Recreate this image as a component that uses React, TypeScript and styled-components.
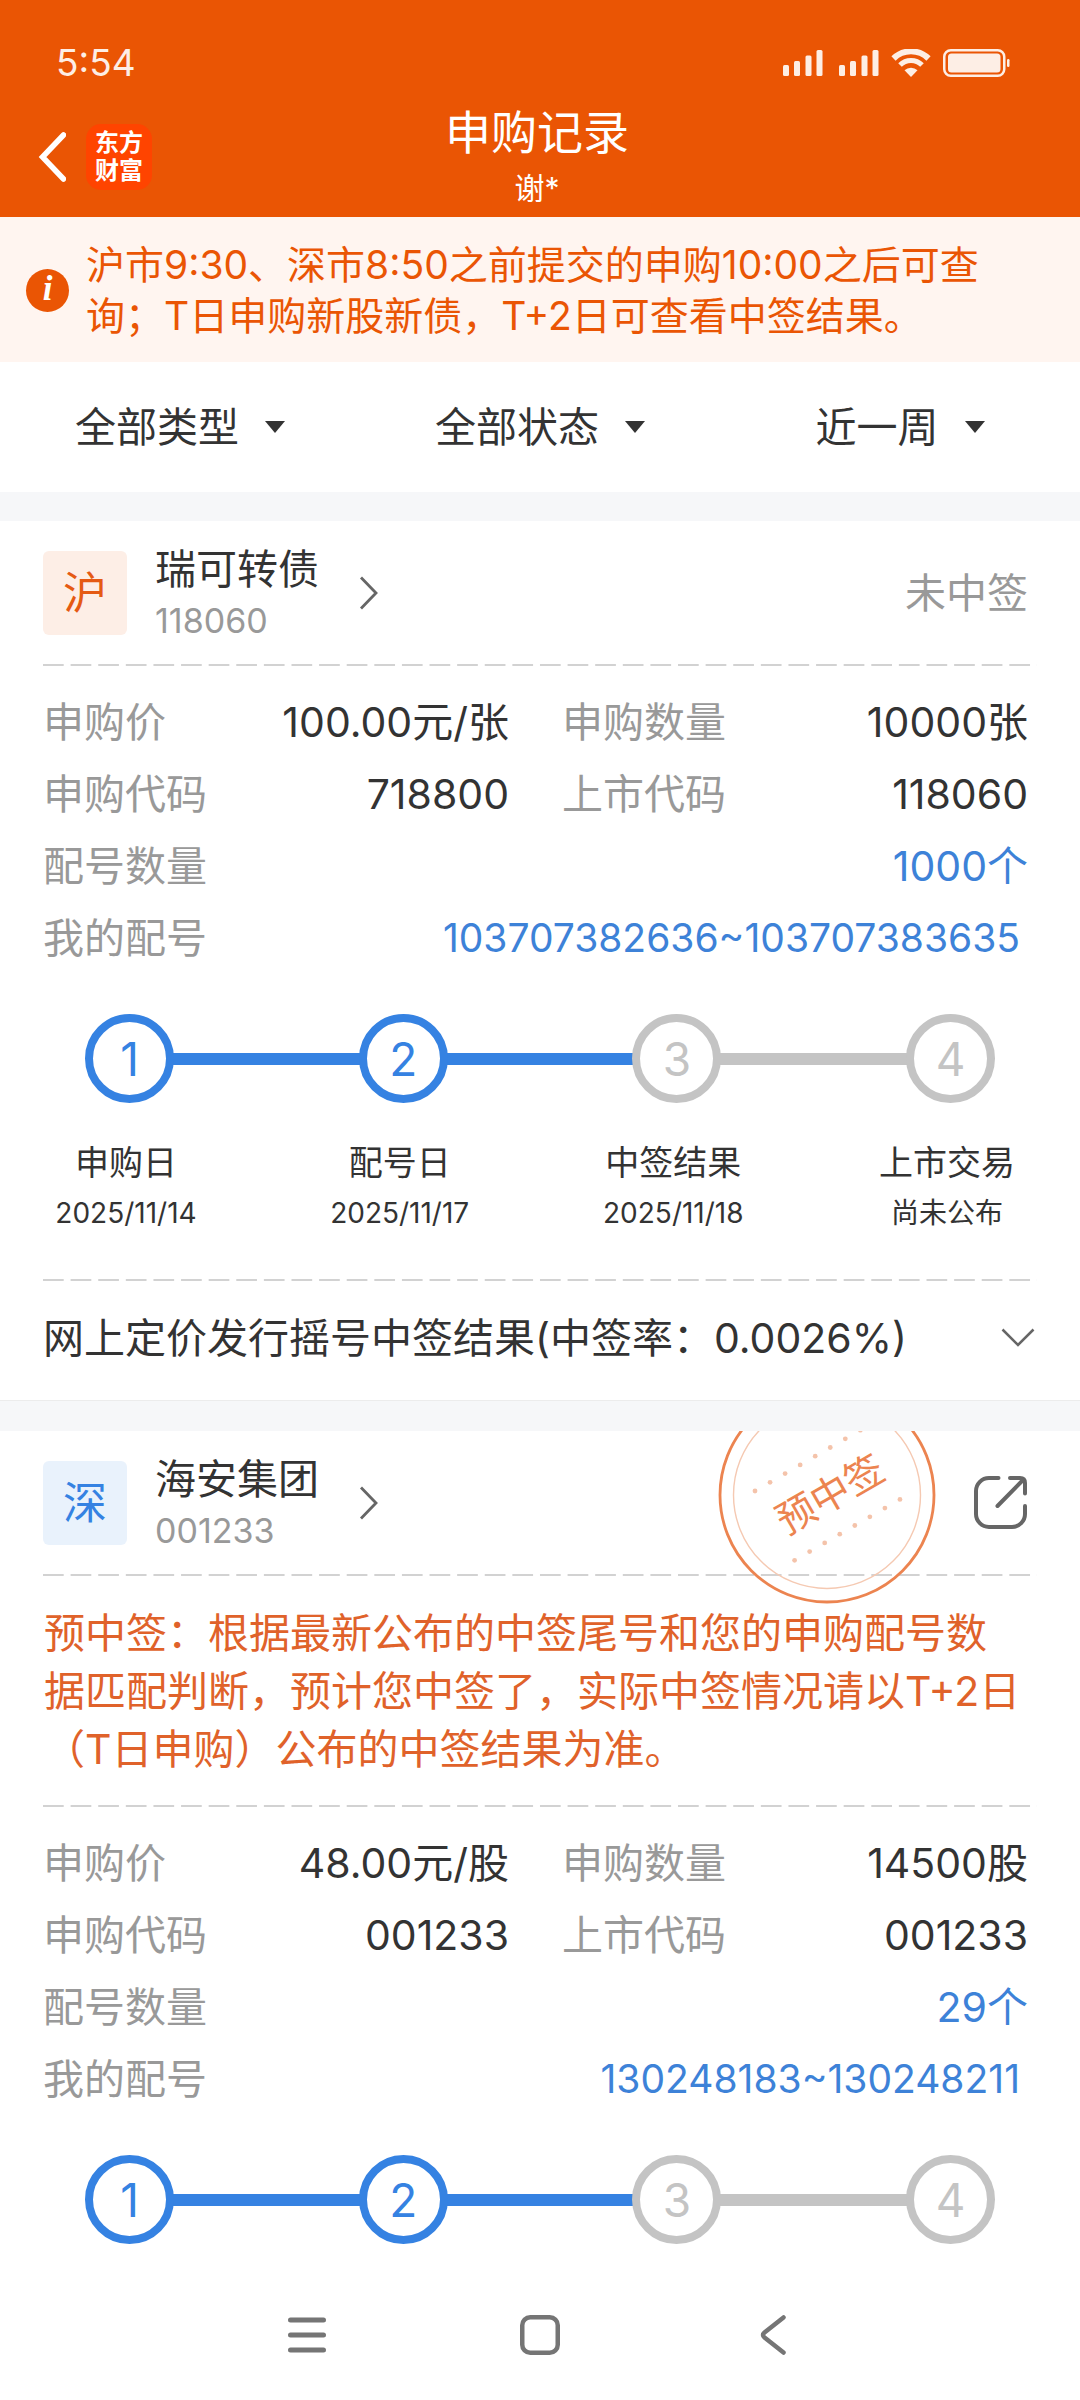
import React from "react";
import styled, { createGlobalStyle } from "styled-components";

const color = {
  brand: "#ea5504",
  brandSoft: "#fff5f0",
  warn: "#e0622a",
  blue: "#3d82d8",
  line: "#3582e2",
  idle: "#c4c4c4",
  text: "#333333",
  muted: "#999999",
  icon: "#666666",
  band: "#f6f7f9",
};

const GlobalStyle = createGlobalStyle`
  *, *::before, *::after { box-sizing: border-box; }
  body {
    margin: 0;
    background: #ffffff;
    color: ${color.text};
    font-family: Inter, "Noto Sans CJK SC", sans-serif;
    font-size: 41px;
    line-height: 72px;
  }
  button, select {
    margin: 0;
    padding: 0;
    border: 0;
    background: none;
    color: inherit;
    font: inherit;
    cursor: pointer;
  }
  h1, h2, p, dl, dd, dt, ol { margin: 0; padding: 0; font-weight: 400; }
  ol { list-style: none; }
  svg { display: block; flex: none; }
`;

const Screen = styled.div`
  display: flex;
  flex-direction: column;
  min-height: 100vh;
`;

/* ---------- top area ---------- */

const Header = styled.header`
  background: ${color.brand};
  color: #ffffff;
`;

const StatusBar = styled.div`
  display: flex;
  align-items: center;
  justify-content: space-between;
  padding: 38px 70px 0 56px;
  height: 88px;
  color: #fdeee5;
  font-size: 37px;
  line-height: 50px;
`;

const StatusIcons = styled.div`
  display: flex;
  align-items: center;
  gap: 12px;
`;

const SignalPair = styled.div`
  display: flex;
  gap: 16px;
`;

const TitleBar = styled.div`
  display: grid;
  grid-template-columns: 1fr auto 1fr;
  height: 129px;
`;

const TitleLeft = styled.div`
  display: flex;
  align-items: center;
  gap: 20px;
  padding: 9px 0 0 38px;
`;

const TitleText = styled.div`
  display: flex;
  flex-direction: column;
  gap: 4px;
  padding: 14px 6px 0 0;
  text-align: center;
`;

const Title = styled.h1`
  font-size: 46px;
  line-height: 60px;
`;

const Owner = styled.p`
  font-size: 30px;
  line-height: 44px;
`;

const Logo = styled.div`
  display: flex;
  flex-direction: column;
  align-items: center;
  justify-content: center;
  width: 66px;
  height: 66px;
  border-radius: 15px;
  background: #ff4400;
  font-size: 24px;
  font-weight: 700;
  line-height: 28px;
`;

const Notice = styled.div`
  display: flex;
  align-items: center;
  gap: 17px;
  padding: 22px 60px 21px 26px;
  background: ${color.brandSoft};
  color: ${color.brand};
  font-size: 39px;
  line-height: 51px;
`;

const InfoDot = styled.span`
  flex: none;
  width: 43px;
  height: 43px;
  border-radius: 50%;
  background: ${color.brand};
  color: #ffffff;
  font: italic 700 35px / 40px "Liberation Serif", serif;
  text-align: center;
`;

/* ---------- filters ---------- */

const Filters = styled.form`
  display: grid;
  grid-template-columns: repeat(3, 1fr);
  height: 130px;
`;

const FilterLabel = styled.label`
  display: flex;
  align-items: center;
  justify-content: center;
  gap: 26px;
`;

const FilterSelect = styled.select`
  appearance: none;
  field-sizing: content;
  outline: none;
`;

/* ---------- record cards ---------- */

const Records = styled.main`
  display: flex;
  flex-direction: column;
  gap: 30px;
  padding-top: 29px;
  background: ${color.band};
`;

const Card = styled.article`
  position: relative;
  overflow: hidden;
  background: #ffffff;
`;

const CardHead = styled.div`
  display: flex;
  align-items: center;
  gap: 28px;
  height: 143px;
  padding: 0 52px 0 43px;
`;

const Market = styled.span<{ $tone: "sh" | "sz" }>`
  flex: none;
  width: 84px;
  height: 84px;
  border-radius: 6px;
  background: ${(p) => (p.$tone === "sh" ? "#fdeee6" : "#e9f2fc")};
  color: ${(p) => (p.$tone === "sh" ? "#e55a13" : "#3582e2")};
  font-size: 44px;
  line-height: 84px;
  text-align: center;
`;

const StockLink = styled.a`
  display: flex;
  align-items: center;
  gap: 40px;
  margin-right: auto;
  color: inherit;
  text-decoration: none;
`;

const StockTitle = styled.div`
  padding-top: 4px;
`;

const StockName = styled.h2`
  font-size: 41px;
  line-height: 52px;
`;

const StockCode = styled.p`
  color: ${color.muted};
  font-size: 34px;
  line-height: 52px;
`;

const Result = styled.span`
  color: ${color.muted};
`;

const Stamp = styled.svg`
  position: absolute;
  top: -46px;
  right: 143px;
  font-size: 39px;
`;

const Dashes = styled.hr`
  height: 2px;
  margin: 0 43px;
  border: 0;
  background-image: linear-gradient(to right, #d2d2d2 76%, transparent 76%);
  background-size: 28px 2px;
  background-repeat: round;
`;

const Advice = styled.p`
  padding: 28px 44px 27px;
  color: ${color.warn};
  line-height: 58px;
`;

const Facts = styled.dl`
  display: grid;
  grid-template-columns: 1fr 1fr;
  column-gap: 53px;
  padding: 20px 52px 40px 43px;
`;

const Fact = styled.div<{ $wide?: boolean }>`
  display: flex;
  justify-content: space-between;
  grid-column: ${(p) => (p.$wide ? "1 / -1" : "auto")};
`;

const FactName = styled.dt`
  color: ${color.muted};
`;

const FactValue = styled.dd<{ $link?: boolean; $range?: boolean }>`
  padding-right: ${(p) => (p.$range ? "8px" : "0")};
  color: ${(p) => (p.$link ? color.blue : color.text)};
  font-size: ${(p) => (p.$range ? "39px" : "41px")};
`;

const Track = styled.ol`
  display: flex;
  align-items: center;
  padding: 0 85px;
`;

const Step = styled.li<{ $done: boolean; $first: boolean }>`
  display: flex;
  align-items: center;
  flex: ${(p) => (p.$first ? "none" : "1")};
  color: ${(p) => (p.$done ? color.line : color.idle)};
`;

const StepLine = styled.span<{ $on: boolean }>`
  flex: 1;
  height: 12px;
  margin: 0 -2px;
  background: ${(p) => (p.$on ? color.line : color.idle)};
`;

const StepDot = styled.span`
  z-index: 1;
  width: 89px;
  height: 89px;
  border: 8px solid currentColor;
  border-radius: 50%;
  background: #ffffff;
  font-size: 46px;
  line-height: 75px;
  text-align: center;
`;

const Dates = styled.div`
  display: flex;
  justify-content: space-between;
  padding: 34px 58px 40px 51px;
`;

const DateCell = styled.div`
  width: 150px;
  text-align: center;
  white-space: nowrap;
  line-height: 51px;
`;

const DateName = styled.p`
  font-size: 34px;
`;

const DateValue = styled.p`
  font-size: 28px;
`;

const ExpandRow = styled.button`
  display: flex;
  align-items: center;
  justify-content: space-between;
  width: 100%;
  height: 120px;
  padding: 0 45px 6px 43px;
  border-bottom: 1px solid #ececec;
  text-align: left;
`;

/* ---------- system navigation ---------- */

const SystemNav = styled.nav`
  display: flex;
  justify-content: center;
  gap: 133px;
  height: 130px;
  margin-top: auto;
  background: #ffffff;
`;

const NavButton = styled.button`
  display: flex;
  align-items: center;
  justify-content: center;
  width: 100px;
`;

/* ---------- drawings ---------- */

const Signal = () => (
  <svg width="40" height="28" viewBox="0 0 40 28" fill="currentColor" aria-hidden="true">
    <rect x="0" y="16" width="6" height="11" rx="1.5" />
    <rect x="11" y="12" width="6" height="15" rx="1.5" />
    <rect x="22.5" y="6.5" width="6" height="20.5" rx="1.5" />
    <rect x="33.5" y="1" width="6" height="26" rx="1.5" />
  </svg>
);

const Wifi = () => (
  <svg width="40" height="28" viewBox="0 0 40 28" fill="none" stroke="currentColor" aria-hidden="true">
    <path d="M2.5 9.5 A25 25 0 0 1 37.5 9.5" strokeWidth="6" />
    <path d="M9 16 A15.5 15.5 0 0 1 31 16" strokeWidth="5" />
    <path d="M20 28 L13.5 21.3 A9.5 9.5 0 0 1 26.5 21.3 Z" fill="currentColor" stroke="none" />
  </svg>
);

const Battery = () => (
  <svg width="67" height="28" viewBox="0 0 67 28" fill="none" aria-hidden="true">
    <rect x="1.25" y="1.25" width="60" height="25.5" rx="6.5" stroke="currentColor" strokeWidth="2.5" />
    <rect x="5" y="4.5" width="52.5" height="19" rx="3.5" fill="currentColor" />
    <rect x="64" y="10" width="2.5" height="8" rx="1.2" fill="currentColor" />
  </svg>
);

const BackArrow = () => (
  <svg width="28" height="50" viewBox="0 0 28 50" fill="none" stroke="currentColor" strokeWidth="5.5" aria-hidden="true">
    <path d="M25.5 3 L4.5 25 L25.5 47" strokeLinecap="round" />
  </svg>
);

const Caret = () => (
  <svg width="20" height="12" viewBox="0 0 20 12" aria-hidden="true">
    <path d="M0 0 H20 L10 12 Z" fill={color.text} />
  </svg>
);

const ChevronRight = () => (
  <svg width="20" height="34" viewBox="0 0 20 34" fill="none" stroke={color.icon} strokeWidth="2.8" aria-hidden="true">
    <path d="M2 1.5 L17 17 L2 32.5" />
  </svg>
);

const ChevronDown = () => (
  <svg width="34" height="19" viewBox="0 0 34 19" fill="none" stroke={color.icon} strokeWidth="2.5" aria-hidden="true">
    <path d="M1.5 1.5 L17 17 L32.5 1.5" />
  </svg>
);

const Share = () => (
  <svg width="54" height="54" viewBox="0 0 54 54" fill="none" stroke={color.icon} strokeWidth="4" strokeLinecap="round" aria-hidden="true">
    <path d="M24.5 2 H15 A13 13 0 0 0 2 15 V38 A13 13 0 0 0 15 51 H38 A13 13 0 0 0 51 38 V30" />
    <path d="M36 2 H46 Q51 2 51 7 V17.5" />
    <path d="M23.5 30 L49 4" />
  </svg>
);

const dotRow = [0, 1, 2, 3, 4, 5, 6, 7];

const PreWinStamp = () => (
  <Stamp width="220" height="220" viewBox="-110 -110 220 220" role="img" aria-label="预中签">
    <circle r="107" fill="none" stroke="#ec8450" strokeWidth="2.8" />
    <circle r="93.5" fill="none" stroke="#f5c9b2" strokeWidth="1.4" />
    {dotRow.map((i) => (
      <g key={i} fill="#f4c3aa">
        <circle cx={-72 + i * 15.05} cy={-4 - i * 8.7} r="2.4" />
        <circle cx={-32.4 + i * 15.05} cy={65.3 - i * 8.7} r="2.4" />
      </g>
    ))}
    <text transform="rotate(-30)" x="3" y="15" textAnchor="middle" fill="#ec8450">
      预中签
    </text>
  </Stamp>
);

/* ---------- data ---------- */

type FactItem = { name: string; value: string; wide?: boolean; link?: boolean; range?: boolean };

const bondFacts: FactItem[] = [
  { name: "申购价", value: "100.00元/张" },
  { name: "申购数量", value: "10000张" },
  { name: "申购代码", value: "718800" },
  { name: "上市代码", value: "118060" },
  { name: "配号数量", value: "1000个", wide: true, link: true },
  { name: "我的配号", value: "103707382636~103707383635", wide: true, link: true, range: true },
];

const stockFacts: FactItem[] = [
  { name: "申购价", value: "48.00元/股" },
  { name: "申购数量", value: "14500股" },
  { name: "申购代码", value: "001233" },
  { name: "上市代码", value: "001233" },
  { name: "配号数量", value: "29个", wide: true, link: true },
  { name: "我的配号", value: "130248183~130248211", wide: true, link: true, range: true },
];

const bondDates = [
  { name: "申购日", value: "2025/11/14" },
  { name: "配号日", value: "2025/11/17" },
  { name: "中签结果", value: "2025/11/18" },
  { name: "上市交易", value: "尚未公布" },
];

const filters = [
  { id: "type", label: "类型", value: "全部类型" },
  { id: "state", label: "状态", value: "全部状态" },
  { id: "range", label: "时间", value: "近一周" },
];

/* ---------- composed parts ---------- */

const Stock = ({ name, code }: { name: string; code: string }) => (
  <StockLink href={`#${code}`}>
    <StockTitle>
      <StockName>{name}</StockName>
      <StockCode>{code}</StockCode>
    </StockTitle>
    <ChevronRight />
  </StockLink>
);

const FactList = ({ items }: { items: FactItem[] }) => (
  <Facts>
    {items.map((f) => (
      <Fact key={f.name} $wide={f.wide}>
        <FactName>{f.name}</FactName>
        <FactValue $link={f.link} $range={f.range}>{f.value}</FactValue>
      </Fact>
    ))}
  </Facts>
);

const Progress = ({ done }: { done: number }) => (
  <Track>
    {[1, 2, 3, 4].map((n) => (
      <Step key={n} $done={n <= done} $first={n === 1}>
        {n > 1 && <StepLine $on={n <= done + 1} />}
        <StepDot>{n}</StepDot>
      </Step>
    ))}
  </Track>
);

export default function App() {
  return (
    <Screen lang="zh-CN">
      <GlobalStyle />
      <Header>
        <StatusBar>
          <span>5:54</span>
          <StatusIcons>
            <SignalPair>
              <Signal />
              <Signal />
            </SignalPair>
            <Wifi />
            <Battery />
          </StatusIcons>
        </StatusBar>
        <TitleBar>
          <TitleLeft>
            <button type="button" aria-label="返回">
              <BackArrow />
            </button>
            <Logo>
              <span>东方</span>
              <span>财富</span>
            </Logo>
          </TitleLeft>
          <TitleText>
            <Title>申购记录</Title>
            <Owner>谢*</Owner>
          </TitleText>
        </TitleBar>
      </Header>

      <Notice>
        <InfoDot>i</InfoDot>
        <p>沪市9:30、深市8:50之前提交的申购10:00之后可查询；T日申购新股新债，T+2日可查看中签结果。</p>
      </Notice>

      <Filters>
        {filters.map((f) => (
          <FilterLabel key={f.id} htmlFor={f.id}>
            <FilterSelect id={f.id} aria-label={f.label} defaultValue={f.value}>
              <option>{f.value}</option>
            </FilterSelect>
            <Caret />
          </FilterLabel>
        ))}
      </Filters>

      <Records>
        <Card>
          <CardHead>
            <Market $tone="sh">沪</Market>
            <Stock name="瑞可转债" code="118060" />
            <Result>未中签</Result>
          </CardHead>
          <Dashes />
          <FactList items={bondFacts} />
          <Progress done={2} />
          <Dates>
            {bondDates.map((d) => (
              <DateCell key={d.name}>
                <DateName>{d.name}</DateName>
                <DateValue>{d.value}</DateValue>
              </DateCell>
            ))}
          </Dates>
          <Dashes />
          <ExpandRow type="button" aria-expanded="false">
            <span>网上定价发行摇号中签结果(中签率：0.0026%)</span>
            <ChevronDown />
          </ExpandRow>
        </Card>

        <Card>
          <CardHead>
            <Market $tone="sz">深</Market>
            <Stock name="海安集团" code="001233" />
            <button type="button" aria-label="分享">
              <Share />
            </button>
          </CardHead>
          <Dashes />
          <PreWinStamp />
          <Advice>
            预中签：根据最新公布的中签尾号和您的申购配号数
            <br />
            据匹配判断，预计您中签了，实际中签情况请以T+2日
            <br />
            （T日申购）公布的中签结果为准。
          </Advice>
          <Dashes />
          <FactList items={stockFacts} />
          <Progress done={2} />
        </Card>
      </Records>

      <SystemNav aria-label="系统导航">
        <NavButton type="button" aria-label="菜单">
          <svg width="38" height="38" viewBox="0 0 38 38" stroke="#757575" strokeWidth="5" strokeLinecap="round" aria-hidden="true">
            <path d="M2.5 4 H35.5 M2.5 19 H35.5 M2.5 34 H35.5" />
          </svg>
        </NavButton>
        <NavButton type="button" aria-label="主页">
          <svg width="40" height="40" viewBox="0 0 40 40" fill="none" stroke="#757575" strokeWidth="4.5" aria-hidden="true">
            <rect x="2.25" y="2.25" width="35.5" height="35.5" rx="8" />
          </svg>
        </NavButton>
        <NavButton type="button" aria-label="返回上一页">
          <svg width="26" height="40" viewBox="0 0 26 40" fill="none" stroke="#757575" strokeWidth="4.5" strokeLinecap="round" aria-hidden="true">
            <path d="M23.5 2.5 L4.5 17.5 Q1.5 20 4.5 22.5 L23.5 37.5" />
          </svg>
        </NavButton>
      </SystemNav>
    </Screen>
  );
}
